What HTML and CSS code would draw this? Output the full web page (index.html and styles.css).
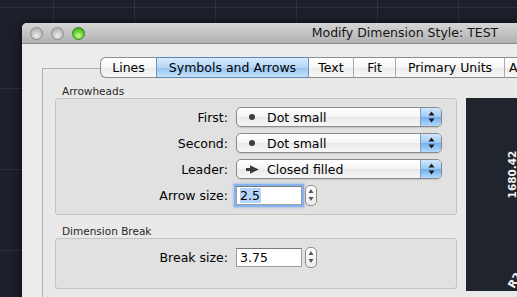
FILE: index.html
```html
<!DOCTYPE html>
<html>
<head>
<meta charset="utf-8">
<link rel="stylesheet" href="styles.css">
</head>
<body>
<div class="window">
  <div class="titlebar">
    <div class="lights">
      <span class="light gray"></span>
      <span class="light gray"></span>
      <span class="light green"></span>
    </div>
    <div class="title">Modify Dimension Style: TEST</div>
  </div>
  <div class="content">
    <div class="tabs">
      <div class="tab t-lines">Lines</div>
      <div class="tab t-sym active">Symbols and Arrows</div>
      <div class="tab t-text">Text</div>
      <div class="tab t-fit">Fit</div>
      <div class="tab t-prim">Primary Units</div>
      <div class="tab t-alt">Alternate Units</div>
    </div>
    <div class="tabbox">
      <div class="left">
        <div class="glabel">Arrowheads</div>
        <div class="group arrows">
          <div class="row">
            <span class="lbl">First:</span>
            <div class="popup">
              <span class="ico"><span class="dot"></span></span>
              <span class="val">Dot small</span>
              <span class="cap"><svg width="7" height="12" viewBox="0 0 7 12"><path d="M3.5 0.5 L6.5 4.5 L0.5 4.5 Z M3.5 11.5 L6.5 7.5 L0.5 7.5 Z" fill="#1a1a1a"/></svg></span>
            </div>
          </div>
          <div class="row">
            <span class="lbl">Second:</span>
            <div class="popup">
              <span class="ico"><span class="dot"></span></span>
              <span class="val">Dot small</span>
              <span class="cap"><svg width="7" height="12" viewBox="0 0 7 12"><path d="M3.5 0.5 L6.5 4.5 L0.5 4.5 Z M3.5 11.5 L6.5 7.5 L0.5 7.5 Z" fill="#1a1a1a"/></svg></span>
            </div>
          </div>
          <div class="row">
            <span class="lbl">Leader:</span>
            <div class="popup">
              <span class="ico"><svg width="13" height="9" viewBox="0 0 13 9"><rect x="0" y="3" width="6" height="3" fill="#3a3a3a"/><path d="M4 0.3 L12.8 4.5 L4 8.7 Z" fill="#3a3a3a"/></svg></span>
              <span class="val">Closed filled</span>
              <span class="cap"><svg width="7" height="12" viewBox="0 0 7 12"><path d="M3.5 0.5 L6.5 4.5 L0.5 4.5 Z M3.5 11.5 L6.5 7.5 L0.5 7.5 Z" fill="#1a1a1a"/></svg></span>
            </div>
          </div>
          <div class="row">
            <span class="lbl">Arrow size:</span>
            <div class="field focus"><span class="sel">2.5</span></div>
            <div class="stepper"><svg width="6" height="14" viewBox="0 0 6 14"><path d="M3 1 L5.5 5 L0.5 5 Z M3 13 L5.5 9 L0.5 9 Z" fill="#555"/></svg></div>
          </div>
        </div>
        <div class="glabel gl2">Dimension Break</div>
        <div class="group brk">
          <div class="row">
            <span class="lbl">Break size:</span>
            <div class="field">3.75</div>
            <div class="stepper"><svg width="6" height="14" viewBox="0 0 6 14"><path d="M3 1 L5.5 5 L0.5 5 Z M3 13 L5.5 9 L0.5 9 Z" fill="#555"/></svg></div>
          </div>
        </div>
      </div>
      <div class="preview">
        <span class="dim">1680.42</span>
        <span class="rad">R2</span>
      </div>
    </div>
  </div>
</div>
</body>
</html>
```
FILE: styles.css
```css
html, body {
  margin: 0;
  height: 100%;
}
body {
  box-sizing: border-box;
  padding: 23px 0 0 22px;
  overflow: hidden;
  background-color: #1d202a;
  background-image:
    linear-gradient(90deg, rgba(255,255,255,0.07) 1px, transparent 1px),
    linear-gradient(rgba(255,255,255,0.07) 1px, transparent 1px);
  background-size: 81px 81px;
  background-position: 53px 7px;
  font-family: "DejaVu Sans", sans-serif;
  color: #000;
}
.window {
  width: 702px;
  height: 320px;
  background: #ececec;
  border-radius: 5px 5px 0 0;
  box-shadow: 0 0 10px rgba(0,0,0,0.7);
}
.titlebar {
  box-sizing: border-box;
  height: 21px;
  display: flex;
  align-items: center;
  background: linear-gradient(#d6d6d6, #b1b1b1);
  border-bottom: 1px solid #8a8a8a;
  border-radius: 5px 5px 0 0;
}
.lights {
  display: flex;
  gap: 8px;
  padding-left: 8px;
  width: 64px;
  box-sizing: border-box;
}
.light {
  width: 13px;
  height: 13px;
  border-radius: 50%;
  box-sizing: border-box;
}
.gray {
  background: radial-gradient(circle at 50% 70%, #f0f0f0 0%, #c8c8c8 45%, #a2a2a2 100%);
  border: 1px solid #8d8d8d;
}
.green {
  background: radial-gradient(circle at 50% 70%, #c9ff9c 0%, #6fd338 45%, #2f9a10 100%);
  border: 1px solid #3a8220;
}
.title {
  flex: 1;
  text-align: center;
  font-size: 12.5px;
  color: #141414;
  line-height: 20px;
}
.content {
  padding: 13px 0 0 20px;
}
.tabs {
  display: flex;
  margin-left: 58px;
  height: 21px;
  position: relative;
  z-index: 1;
}
.tab {
  box-sizing: border-box;
  height: 21px;
  border: 1px solid #8c8c8c;
  border-left: 1px solid #a8a8a8;
  border-right: none;
  display: flex;
  align-items: center;
  justify-content: center;
  font-size: 12.5px;
  background: linear-gradient(#ffffff 0%, #f6f6f6 50%, #eaeaea 51%, #f8f8f8 100%);
  white-space: nowrap;
}
.t-lines {
  width: 56px;
  border-left: 1px solid #8c8c8c;
  border-radius: 6px 0 0 6px;
}
.t-sym { width: 152px; }
.t-text { width: 45px; }
.t-fit { width: 42px; }
.t-prim { width: 109px; }
.t-alt { width: 120px; justify-content: flex-start; padding-left: 4px; }
.active {
  background: linear-gradient(#d8eafc 0%, #b5d6f6 50%, #94c3ef 51%, #c6e2fb 100%);
  border-top-color: #5f87b8;
  border-bottom-color: #5f87b8;
  border-left-color: #6d93c2;
}
.active + .tab {
  border-left-color: #6d93c2;
}
.tabbox {
  margin-top: -10px;
  height: 260px;
  box-sizing: border-box;
  border: 1px solid #b0b0b0;
  border-right: none;
  background: #e9e9e9;
  display: flex;
  gap: 9px;
  padding: 16px 0 0 12px;
}
.left {
  width: 402px;
  display: flex;
  flex-direction: column;
  flex-shrink: 0;
}
.glabel {
  font-size: 10.5px;
  height: 13px;
  line-height: 13px;
  padding-left: 7px;
  color: #262626;
}
.gl2 {
  margin-top: 10px;
}
.group {
  box-sizing: border-box;
  border: 1px solid #c3c3c3;
  border-radius: 3px;
  background: #e1e1e1;
}
.arrows {
  height: 117px;
  padding-top: 8px;
  display: flex;
  flex-direction: column;
  gap: 6px;
}
.brk {
  height: 51px;
  padding-top: 8px;
}
.row {
  display: flex;
  align-items: center;
  height: 20px;
}
.lbl {
  width: 172px;
  margin-right: 8px;
  text-align: right;
  font-size: 12.5px;
}
.popup {
  box-sizing: border-box;
  width: 206px;
  height: 20px;
  border: 1px solid #8b8b8b;
  border-radius: 5px;
  overflow: hidden;
  display: flex;
  align-items: center;
  font-size: 12.5px;
  background: linear-gradient(#ffffff 0%, #f5f5f5 50%, #e9e9e9 51%, #f7f7f7 100%);
  box-shadow: 0 1px 1px rgba(0,0,0,0.12);
}
.ico {
  width: 30px;
  display: flex;
  justify-content: center;
  align-items: center;
}
.dot {
  width: 6px;
  height: 6px;
  border-radius: 50%;
  background: #3c3c3c;
}
.val {
  flex: 1;
}
.cap {
  width: 21px;
  height: 100%;
  box-sizing: border-box;
  border-left: 1px solid #7f9dc6;
  display: flex;
  align-items: center;
  justify-content: center;
  background: linear-gradient(#d3e7fc 0%, #9ccaf3 50%, #73aeec 51%, #b2dafc 100%);
}
.field {
  box-sizing: border-box;
  width: 66px;
  height: 19px;
  border: 1px solid #9d9d9d;
  border-top-color: #7a7a7a;
  background: #fff;
  font-size: 12.5px;
  padding-left: 3px;
  display: flex;
  align-items: center;
}
.focus {
  box-shadow: 0 0 0 2px #86b3ee, 0 0 2px 3px rgba(110,160,230,0.45);
}
.sel {
  background: #b4d4fb;
  padding-right: 1px;
}
.stepper {
  box-sizing: border-box;
  margin-left: 3px;
  width: 12px;
  height: 21px;
  border: 1px solid #8c8c8c;
  border-radius: 5px;
  background: linear-gradient(#ffffff, #ececec);
  display: flex;
  align-items: center;
  justify-content: center;
}
.preview {
  flex-shrink: 0;
  width: 200px;
  height: 193px;
  margin-top: 13px;
  background: #20252d;
  position: relative;
  overflow: hidden;
}
.dim {
  position: absolute;
  left: 20px;
  top: 70px;
  width: 52px;
  height: 13px;
  line-height: 13px;
  text-align: center;
  font-size: 10.5px;
  font-weight: bold;
  color: #f4f4f4;
  transform: rotate(-90deg);
}
.rad {
  position: absolute;
  left: 41px;
  top: 176px;
  font-size: 11px;
  font-weight: bold;
  color: #f4f4f4;
  transform: rotate(-60deg);
}
```
